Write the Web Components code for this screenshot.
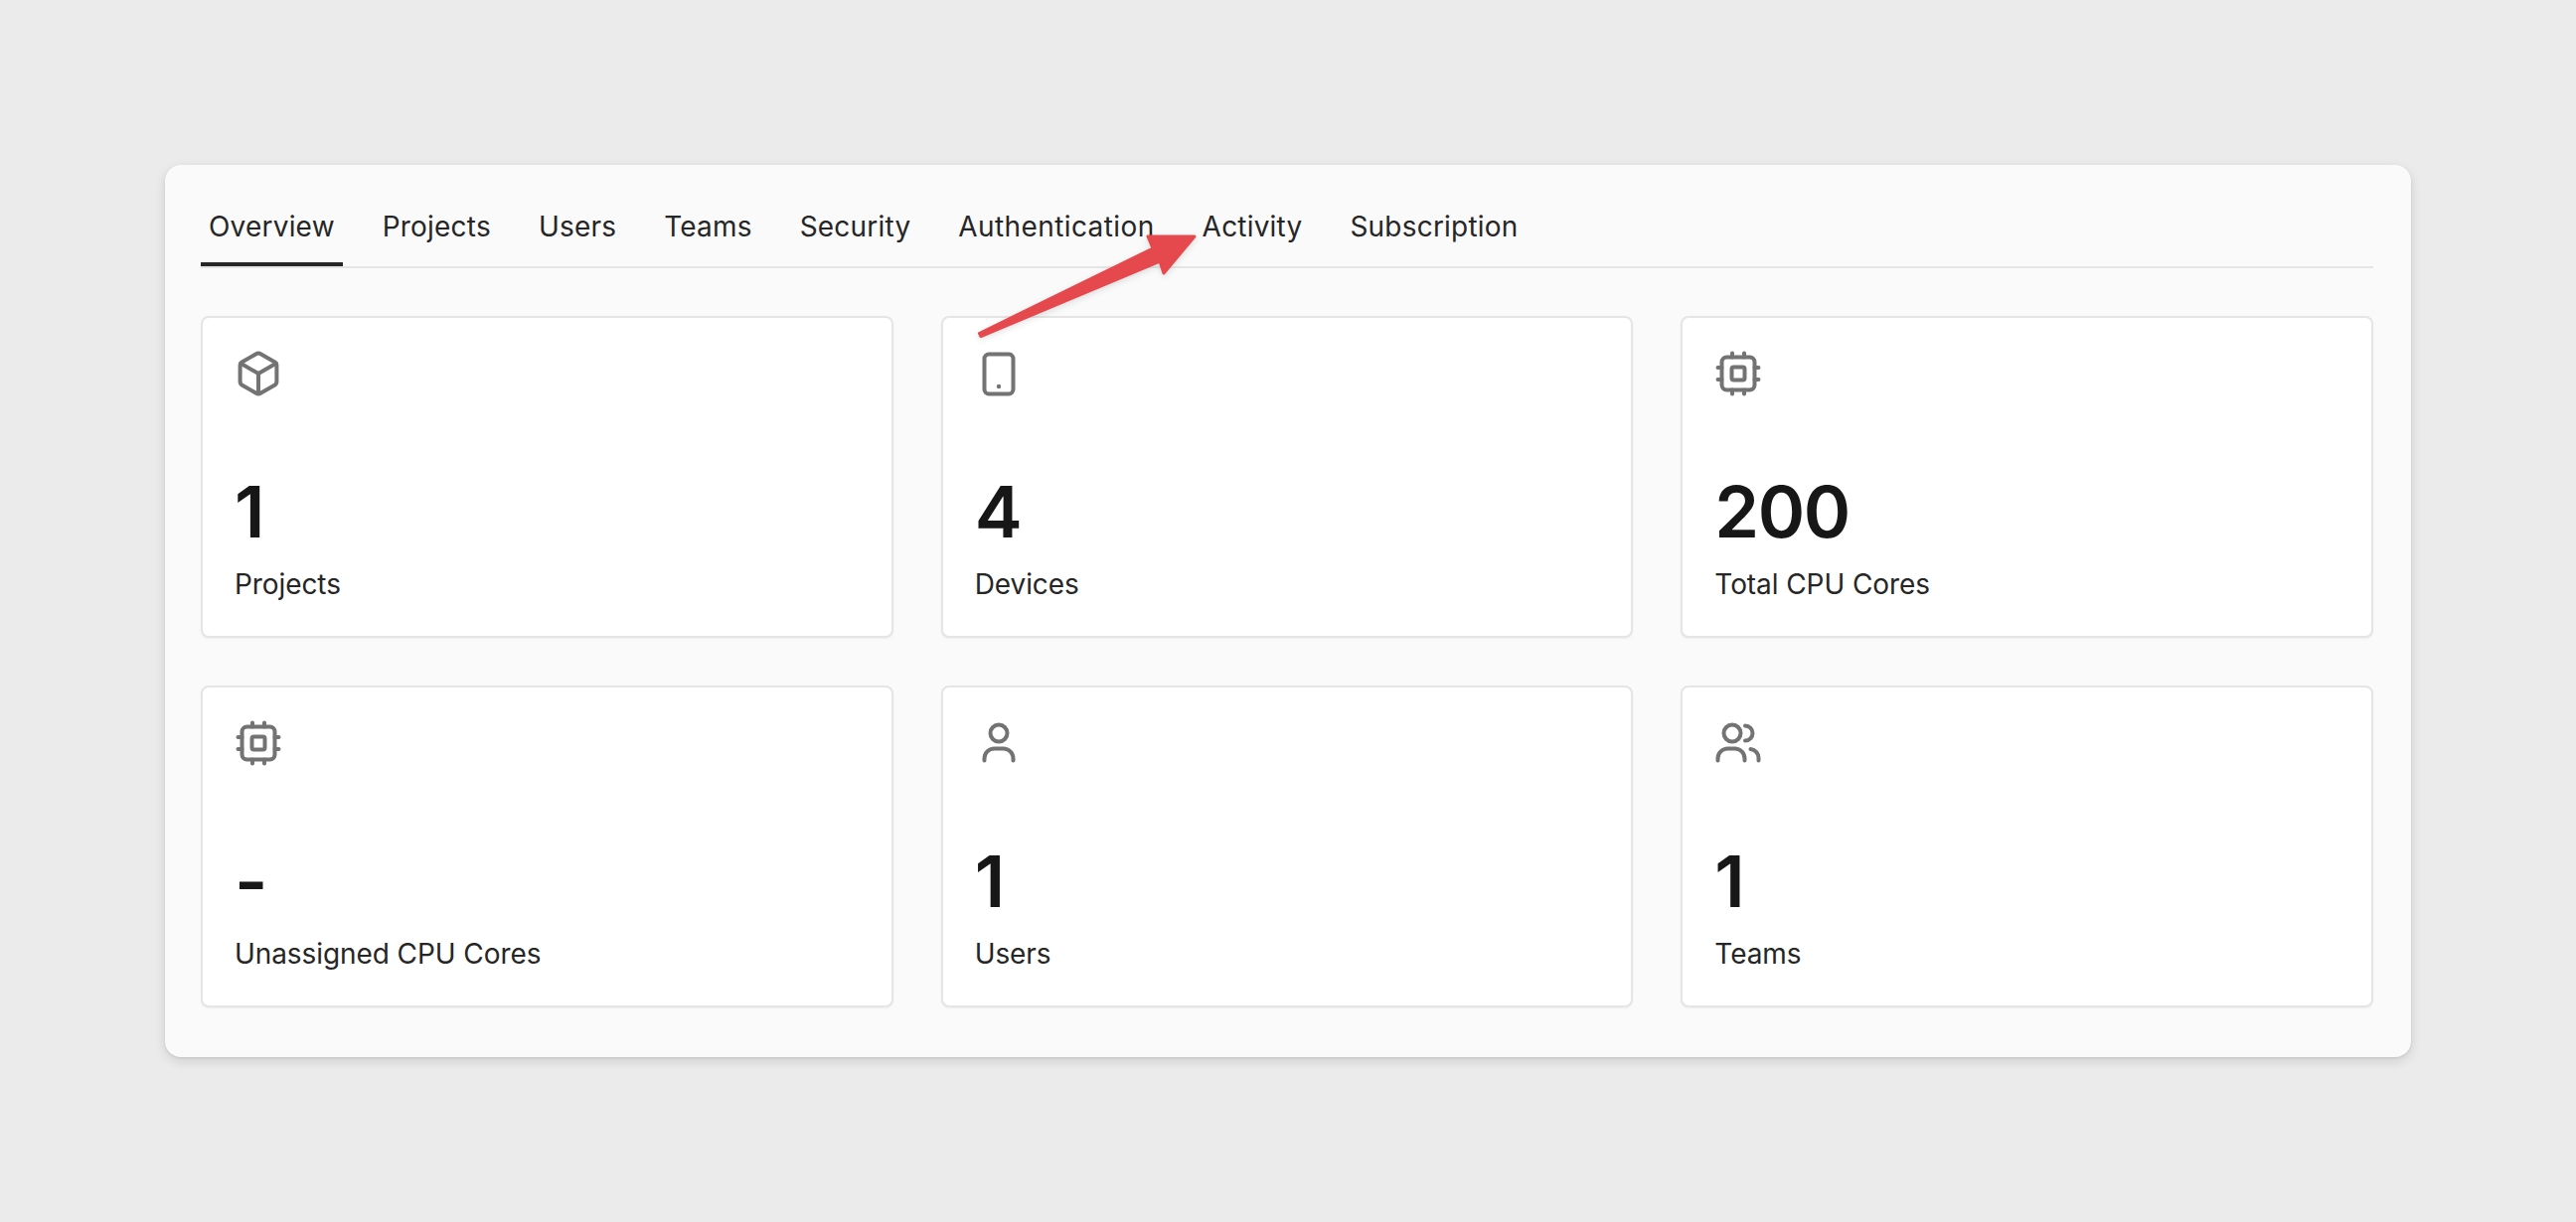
<!DOCTYPE html>
<html>
<head>
<meta charset="utf-8">
<title>Overview</title>
<style>
    html, body { margin: 0; background: #ebebeb; }
    body { font-family: Inter, "Liberation Sans", sans-serif; color: #171717; }
</style>
</head>
<body>

<org-page>
    <tab-bar>
        <tab-item active>Overview</tab-item>
        <tab-item>Projects</tab-item>
        <tab-item>Users</tab-item>
        <tab-item>Teams</tab-item>
        <tab-item>Security</tab-item>
        <tab-item wide>Authentication</tab-item>
        <tab-item>Activity</tab-item>
        <tab-item>Subscription</tab-item>
    </tab-bar>
    <stat-grid>
        <stat-card icon="cube"><span slot="value">1</span>Projects</stat-card>
        <stat-card icon="tablet"><span slot="value">4</span>Devices</stat-card>
        <stat-card icon="chip"><span slot="value">200</span>Total CPU Cores</stat-card>
        <stat-card icon="chip"><span slot="value">-</span>Unassigned CPU Cores</stat-card>
        <stat-card icon="user"><span slot="value">1</span>Users</stat-card>
        <stat-card icon="users"><span slot="value">1</span>Teams</stat-card>
    </stat-grid>
    <arrow-mark></arrow-mark>
</org-page>

<script>
// Outer panel, centred on the grey page
class OrgPage extends HTMLElement {
    constructor() {
        super();
        this.attachShadow({ mode: 'open' });
        this.shadowRoot.innerHTML = `
            <style>
                :host { display: flex; box-sizing: border-box; width: 100%; height: 1230px; padding: 166px; }
                .panel {
                    position: relative;
                    box-sizing: border-box;
                    width: 100%;
                    height: 898px;
                    padding: 36px 38px 50px 36px;
                    background: #fafafa;
                    border-radius: 16px;
                    box-shadow: 0 4px 12px rgba(0,0,0,.12), 0 1px 3px rgba(0,0,0,.08);
                }
            </style>
            <div class="panel"><slot></slot></div>
        `;
    }
}

class TabBar extends HTMLElement {
    constructor() {
        super();
        this.attachShadow({ mode: 'open' });
        this.shadowRoot.innerHTML = `
            <style>
                :host { display: flex; gap: 32px; height: 66px; border-bottom: 2px solid #e5e5e5; }
            </style>
            <slot></slot>
        `;
    }
}

class TabItem extends HTMLElement {
    constructor() {
        super();
        this.attachShadow({ mode: 'open' });
        this.shadowRoot.innerHTML = `
            <style>
                :host {
                    display: block;
                    box-sizing: border-box;
                    height: 66px;
                    padding: 6px 8px 0;
                    font-size: 28px;
                    line-height: 40px;
                    font-weight: 400;
                    letter-spacing: .2px;
                    color: #262626;
                }
                :host([wide]) { letter-spacing: .4px; }
                :host([active]) { border-bottom: 4px solid #262626; }
            </style>
            <slot></slot>
        `;
    }
}

class StatGrid extends HTMLElement {
    constructor() {
        super();
        this.attachShadow({ mode: 'open' });
        this.shadowRoot.innerHTML = `
            <style>
                :host { display: grid; grid-template-columns: repeat(3, 1fr); column-gap: 48px; row-gap: 48px; margin-top: 48px; }
            </style>
            <slot></slot>
        `;
    }
}

// stroke paths on a 24 unit box, drawn at 48px
const ICONS = {
    cube: `<path d="M10.9 2.1a2.2 2.2 0 0 1 2.2 0l7 4a2.2 2.2 0 0 1 1.1 1.9v8a2.2 2.2 0 0 1-1.1 1.9l-7 4a2.2 2.2 0 0 1-2.2 0l-7-4a2.2 2.2 0 0 1-1.1-1.9V8a2.2 2.2 0 0 1 1.1-1.9z"/><path d="M3.1 6.9 12 12l8.9-5.1M12 12v10"/>`,
    tablet: `<rect x="4.75" y="2.25" width="14.5" height="20" rx="2.25"/><circle cx="12" cy="18.5" r="1.1" fill="#737373" stroke="none"/>`,
    chip: `<rect x="3.75" y="3.75" width="16.5" height="16.5" rx="2.5"/><rect x="8.75" y="8.75" width="6.5" height="6.5" rx="1"/><path d="M9 1.75v2M15 1.75v2M9 20.25v2M15 20.25v2M1.75 9h2M1.75 15h2M20.25 9h2M20.25 15h2"/>`,
    user: `<circle cx="12" cy="7" r="4.25"/><path d="M4.75 20.75v-1a5 5 0 0 1 5-5h4.5a5 5 0 0 1 5 5v1"/>`,
    users: `<circle cx="9" cy="7" r="4.25"/><path d="M1.75 20.75v-1a5 5 0 0 1 5-5h3.5a5 5 0 0 1 5 5v1"/><path d="M15.5 3.25a3.75 3.75 0 0 1 0 7.5"/><path d="M18.25 15a4.5 4.5 0 0 1 4 4.75v1"/>`
};

class StatCard extends HTMLElement {
    constructor() {
        super();
        this.attachShadow({ mode: 'open' });
        this.shadowRoot.innerHTML = `
            <style>
                :host {
                    display: flex;
                    flex-direction: column;
                    box-sizing: border-box;
                    height: 324px;
                    padding: 32px;
                    background: #fff;
                    border: 2px solid #e5e5e5;
                    border-radius: 8px;
                    box-shadow: 0 1px 2px rgba(0,0,0,.05);
                }
                svg { display: block; width: 48px; height: 48px; fill: none; stroke: #737373; stroke-width: 2; stroke-linecap: round; stroke-linejoin: round; }
                .value { margin-top: auto; font-size: 72px; line-height: 80px; font-weight: 600; letter-spacing: -1.5px; color: #171717; }
                .label { margin-top: 13px; font-size: 28px; line-height: 40px; letter-spacing: -.08px; color: #262626; }
            </style>
            <svg viewBox="0 0 24 24"></svg>
            <div class="value"><slot name="value"></slot></div>
            <div class="label"><slot></slot></div>
        `;
        this.shadowRoot.querySelector('svg').innerHTML = ICONS[this.getAttribute('icon')];
    }
}

// The red annotation arrow lies over the tabs and the second card
class ArrowMark extends HTMLElement {
    constructor() {
        super();
        this.attachShadow({ mode: 'open' });
        this.shadowRoot.innerHTML = `
            <style>
                :host { position: absolute; left: 808px; top: 62px; width: 240px; height: 120px; pointer-events: none; }
                svg { display: block; filter: drop-shadow(0 2px 3px rgba(0,0,0,.12)); }
            </style>
            <svg width="240" height="120" viewBox="0 0 240 120">
                <path d="M11.5 107.5 L186 22 L181 10 L228 10 L197 47 L193 35 L13 110.5 Z" fill="#e5484d" stroke="#e5484d" stroke-width="3" stroke-linejoin="round"/>
            </svg>
        `;
    }
}

customElements.define('org-page', OrgPage);
customElements.define('tab-bar', TabBar);
customElements.define('tab-item', TabItem);
customElements.define('stat-grid', StatGrid);
customElements.define('stat-card', StatCard);
customElements.define('arrow-mark', ArrowMark);
</script>
</body>
</html>
